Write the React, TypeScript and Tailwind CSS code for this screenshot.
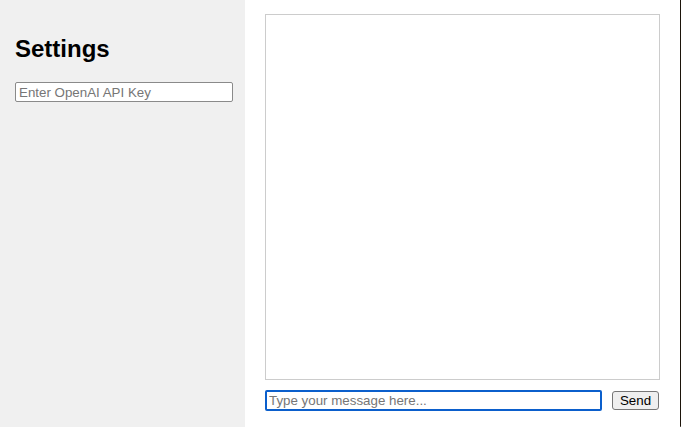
import React from "react";

export default function App() {
  return (
    <div
      className="flex h-[427px] w-[681px] overflow-hidden bg-white"
      style={{ fontFamily: '"Liberation Sans", Arial, sans-serif' }}
    >
      <aside className="w-[245px] shrink-0 bg-[#f0f0f0] px-[15px] pt-[15px]">
        <h2 className="mt-[20px] mb-[20px] text-[24px] font-bold leading-[27px] text-black">
          Settings
        </h2>
        <input
          type="text"
          placeholder="Enter OpenAI API Key"
          className="block h-[20px] w-[218px] rounded-[2px] border border-[#8a8a8a] bg-white px-[3px] text-[13.33px] text-black placeholder:text-[#767676] outline-none"
        />
      </aside>
      <main className="flex flex-1 flex-col pl-[20px] pr-[20px] pt-[14px]">
        <div className="h-[366px] w-[395px] border border-[#cccccc] bg-white" />
        <div className="mt-[10px] flex items-center gap-[10px]">
          <input
            type="text"
            placeholder="Type your message here..."
            className="block h-[21px] w-[337px] rounded-[2px] border-2 border-[#0b5fcc] bg-white px-[2px] text-[13.33px] text-black placeholder:text-[#767676] outline-none"
          />
          <button className="h-[19px] w-[47px] rounded-[3px] border border-[#767676] bg-[#efefef] text-[13.33px] leading-none text-black">
            Send
          </button>
        </div>
      </main>
      <div className="w-[1px] shrink-0 rounded-bl-[3px] bg-[#1c140a]" />
    </div>
  );
}
